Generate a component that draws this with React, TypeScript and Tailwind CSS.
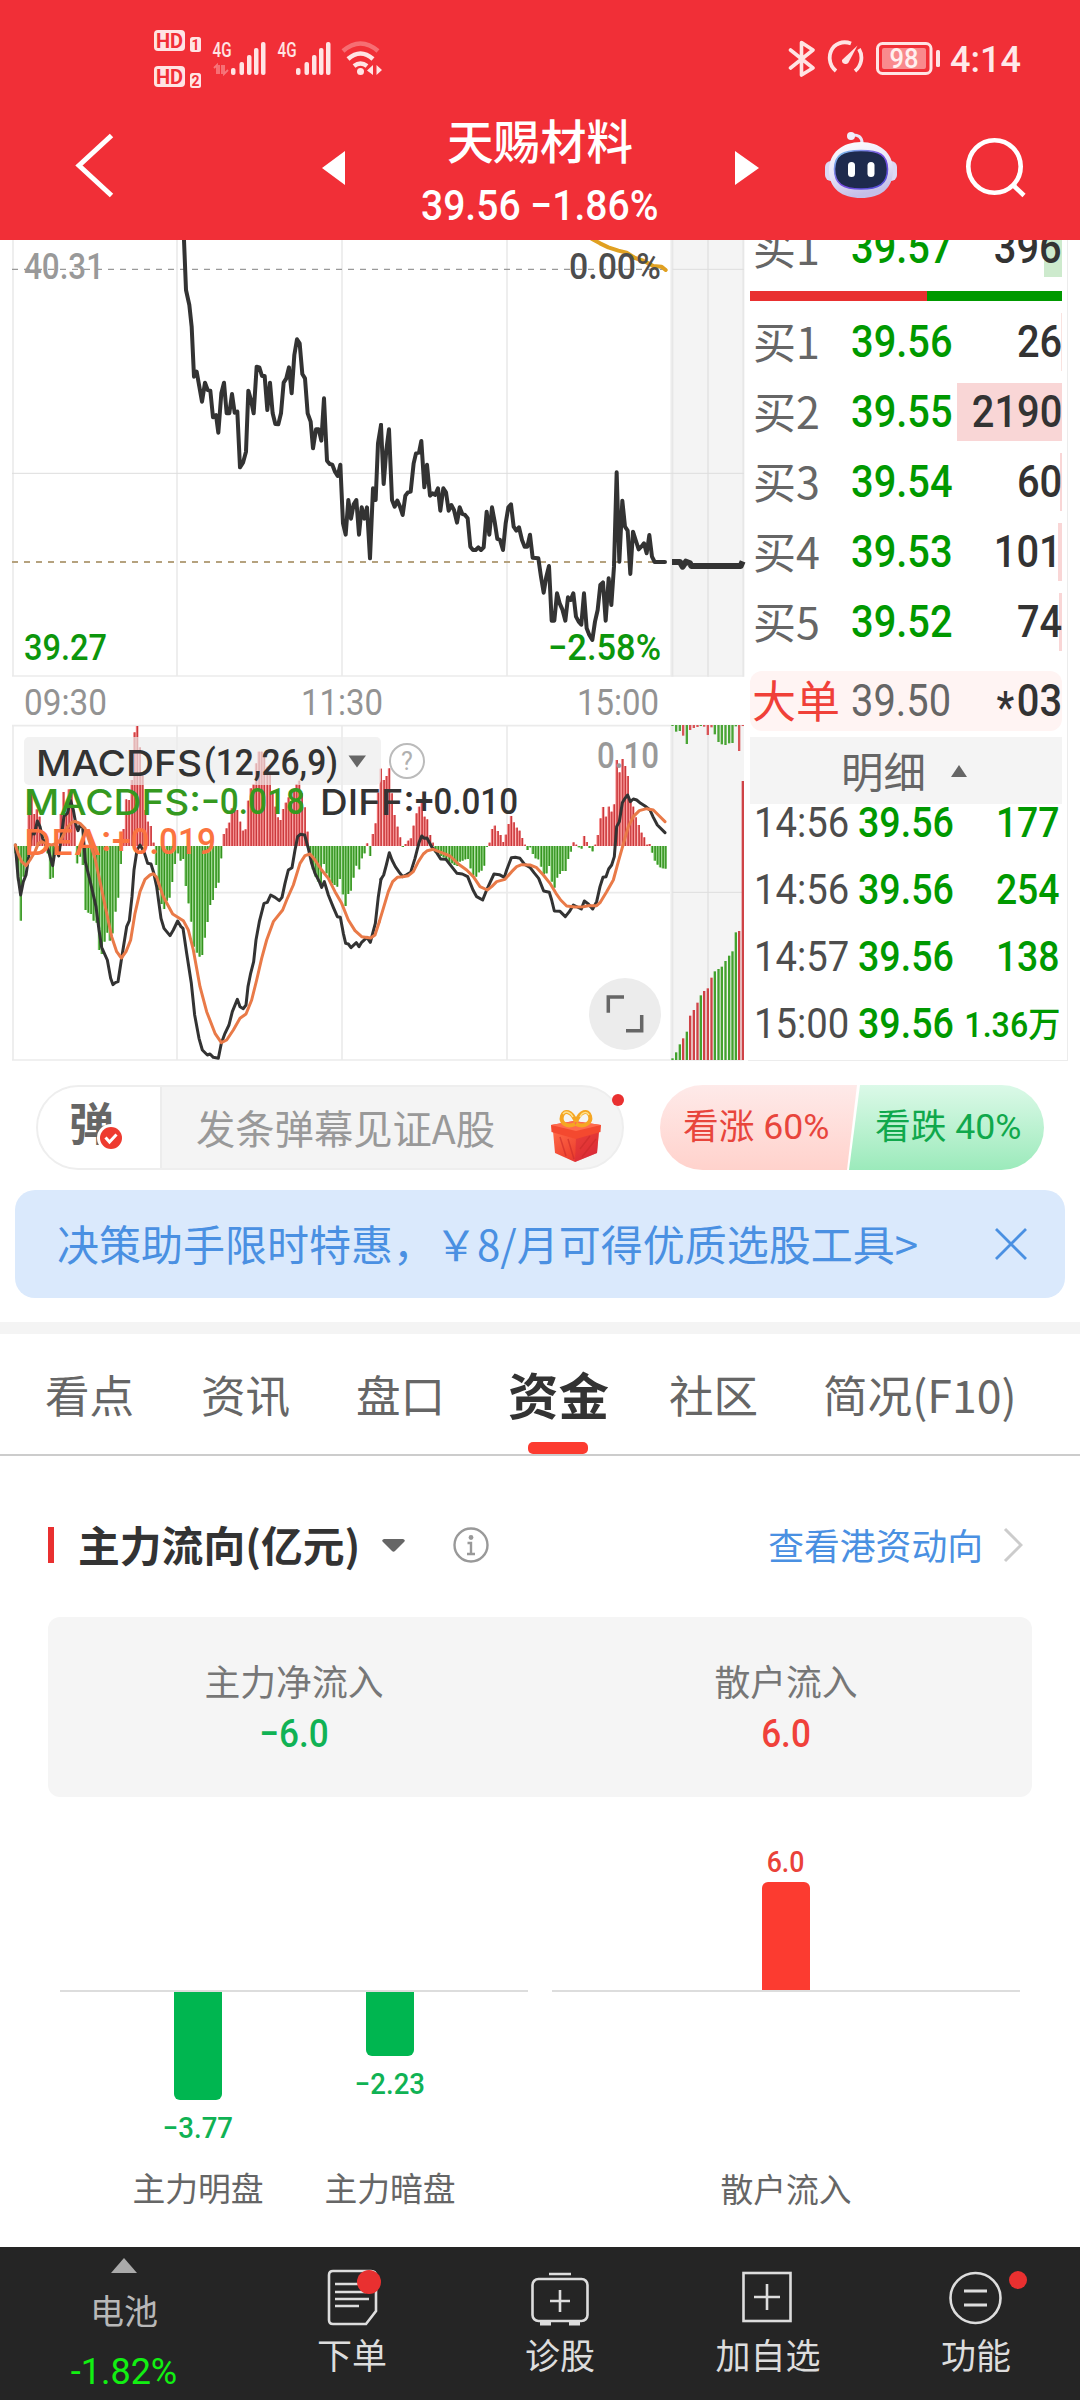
import React from "react";

const NUM = "font-['Roboto','Noto_Sans_CJK_SC',sans-serif]";
const CJK = "font-['Noto_Sans_CJK_SC',sans-serif]";

/* ---------- chart data (drawing units, three per pixel) ---------- */

const PRICE_A =
  "552,0 552,30 558,180 568,225 575,290 582,440 590,425 598,470 606,515 615,458 623,480 631,482 639,562 648,555 655,608 664,490 672,458 680,550 688,550 696,492 704,548 712,545 720,712 729,698 738,665 745,482 753,510 761,550 770,410 778,412 786,438 794,438 802,540 810,458 818,550 826,582 835,583 843,550 851,458 859,445 867,412 875,490 883,375 891,328 899,340 907,432 915,445 923,550 932,575 939,655 948,598 956,598 964,632 972,505 981,692 989,702 997,704 1005,725 1013,738 1021,704 1029,880 1037,914 1045,810 1053,866 1061,823 1069,810 1077,914 1085,832 1093,866 1101,832 1110,985 1119,775 1127,810 1134,640 1143,585";
const PRICE_B =
  "33,585 41,762 49,660 57,598 66,810 74,830 82,812 90,830 98,855 106,797 114,787 122,785 131,700 138,670 147,668 154,633 163,772 171,704 180,797 188,790 195,795 204,775 211,842 220,775 228,787 236,842 244,825 252,840 261,878 269,832 277,852 285,855 293,865 301,950 309,960 317,960 325,952 333,960 341,952 350,845 358,914 366,832 374,875 382,927 390,930 399,960 407,880 415,832 423,823 431,890 439,902 447,892 456,930 464,950 472,950 480,914 488,983 505,985 513,1040 521,1088 529,1040 537,1008 545,1172 553,1172 561,1090 569,1120 577,1138 586,1172 594,1102 602,1110 610,1090 618,1160 626,1175 634,1184 642,1090 650,1195 658,1215 667,1230 675,1175 683,1140 691,1065 699,1057 707,1172 716,1045 724,1125 732,1010 740,727 748,995 757,812 765,890 773,902 781,1032 789,905 797,930 806,958 814,950 822,940 830,970 838,915 846,980 854,996 885,996";
const AVERAGE = "665,26 690,40 715,52 745,62 770,68 795,84 820,92 850,108 875,110 887,120";
const AFTER_HOURS = "906,996 930,996 938,1010 948,995 960,1000 964,1008 1112,1008 1118,994";

const DIFF_A =
  "46,405 54,500 62,555 70,515 78,495 86,440 94,370 103,372 112,333 120,350 128,385 136,400 145,420 153,450 158,467 166,415 176,438 184,380 192,318 202,310 212,272 220,300 228,345 234,362 240,345 248,352 256,455 272,520 288,590 297,660 305,712 322,750 332,805 339,824 346,818 354,815 364,750 380,650 388,632 396,560 402,480 411,420 420,405 432,425 443,460 453,462 461,488 470,530 483,625 492,655 510,677 520,660 533,633 543,650 549,655 560,730 574,820 584,915 597,985 607,1020 622,1035 630,1032 640,1042 655,1045 664,1000 675,970 687,945 697,905 712,868 720,890 730,896 738,885 744,830 752,790 761,755 768,690 778,635 792,580 802,577 812,555 825,562 838,572 846,562 855,520 865,480 876,473 885,420 893,380 901,373 914,375 925,415 935,460 945,490 958,515 965,532 973,515 985,555 1000,592 1012,620 1021,622 1030,670 1037,700 1045,702 1053,713 1069,698 1077,710 1085,697 1101,682 1111,697 1126,640 1135,560 1143,508";
const DIFF_B =
  "33,508 41,495 49,465 58,428 66,450 76,470 88,487 98,500 108,495 122,487 135,445 147,398 155,378 163,385 171,384 185,410 198,425 212,447 228,448 245,470 261,490 277,492 293,500 309,540 320,560 338,570 350,540 360,518 372,492 388,494 403,502 410,480 424,443 436,442 450,445 464,463 480,472 492,488 506,505 521,543 538,547 545,570 553,603 570,604 586,620 598,605 610,585 634,597 643,573 655,582 668,597 680,575 690,530 699,502 708,500 716,477 725,465 733,440 740,350 748,335 757,278 765,265 773,255 781,275 790,267 800,270 812,280 825,288 840,300 850,322 862,345 885,368";
const DEA_A =
  "46,405 54,430 65,455 78,467 90,450 105,425 115,400 125,395 140,402 155,405 170,400 185,385 200,355 215,337 225,334 240,340 255,355 270,400 285,445 300,515 318,600 335,680 350,725 364,744 378,725 392,690 405,610 420,545 435,508 450,495 460,491 470,502 490,560 518,612 550,632 565,660 580,720 600,830 620,905 645,970 664,998 680,990 700,960 720,925 738,912 755,870 770,810 785,745 800,690 820,635 848,600 860,570 880,525 900,460 915,437 930,432 945,450 965,480 985,505 1005,545 1025,580 1045,630 1065,662 1085,680 1112,684 1125,675 1138,635";
const DEA_B =
  "28,635 40,595 55,545 68,515 82,502 98,500 115,497 130,485 145,455 160,432 172,422 190,418 215,428 240,438 265,462 290,480 310,500 330,530 352,540 365,530 380,515 405,508 425,485 440,470 455,464 480,465 500,473 520,495 540,520 558,550 572,570 590,588 615,591 640,590 655,587 680,587 690,578 710,545 730,510 745,455 762,395 775,350 790,320 808,302 830,296 850,300 865,315 885,335";

const HIST_A =
  "46,430 54,512 62,632 70,500 78,470 86,292 94,250 102,312 110,298 118,320 126,385 134,392 142,430 150,507 158,503 166,435 174,430 182,312 190,246 198,312 206,238 214,245 223,330 231,460 240,440 248,465 256,600 264,608 272,612 280,632 289,638 297,720 305,732 313,695 321,668 329,692 337,670 346,605 354,563 362,462 370,357 378,268 386,270 395,210 403,67 411,48 419,112 427,190 435,300 443,335 452,348 460,398 468,465 476,540 484,582 492,597 500,572 508,563 516,516 524,462 533,430 541,452 549,447 557,528 565,580 573,635 581,710 590,728 598,740 606,735 614,683 622,636 630,585 638,570 647,534 655,518 663,445 671,372 679,355 687,338 695,295 703,280 711,300 720,335 728,362 736,358 744,272 752,235 760,222 768,160 776,125 784,125 792,130 801,170 809,190 817,250 825,290 833,322 841,330 849,297 857,278 865,262 873,275 881,240 889,222 897,212 905,250 914,292 922,365 930,440 938,478 946,500 954,515 962,520 971,462 979,490 987,505 995,520 1003,525 1011,530 1019,507 1028,553 1036,588 1044,552 1052,542 1060,503 1068,467 1077,478 1085,445 1093,430 1101,400";
const HIST_B =
  "0,438 8,372 16,340 24,248 32,176 41,210 49,198 57,175 65,250 73,315 82,350 90,382 98,411 106,402 114,392 122,385 130,347 139,310 147,290 155,270 163,320 171,328 180,375 188,398 196,428 204,432 212,438 220,442 228,452 237,455 245,460 253,465 261,468 269,455 277,452 285,448 293,447 301,475 309,495 318,500 326,487 334,482 342,467 350,411 358,398 366,357 374,347 383,363 391,375 399,396 407,374 415,342 423,318 431,337 440,353 448,362 456,384 464,404 472,420 480,412 488,432 496,445 504,448 513,470 521,492 529,490 537,468 545,515 553,533 561,503 569,492 577,483 586,483 594,447 602,425 610,397 618,404 626,412 634,416 642,378 650,396 658,414 667,424 675,404 683,375 691,325 699,291 707,320 716,290 724,305 732,283 740,150 748,187 757,147 765,168 773,198 781,268 789,290 797,322 806,345 814,368 822,382 830,404 838,402 846,428 854,452 862,464 870,472 878,475 886,476";

const SIDE_BARS: [number, number, number, string][] = [
  [908, 48, 1045, "g"], [919, 65, 1027, "g"], [930, 63, 1003, "g"], [940, 77, 985, "r"],
  [951, 102, 965, "g"], [961, 60, 917, "r"], [972, 54, 900, "r"], [983, 51, 878, "r"],
  [993, 48, 856, "g"], [1003, 50, 843, "r"], [1014, 75, 835, "r"], [1025, 52, 803, "r"],
  [1035, 73, 784, "g"], [1046, 96, 777, "g"], [1056, 103, 770, "g"], [1067, 105, 753, "g"],
  [1078, 100, 737, "g"], [1088, 99, 724, "g"], [1098, 49, 667, "g"], [1108, 123, 663, "r"],
  [1119, 48, 213, "r"],
];

const BASE = 408;

function Histogram({ data }: { data: string }) {
  return (
    <g>
      {data.split(" ").map((p) => {
        const [x, y] = p.split(",").map(Number);
        const up = y < BASE;
        const top = Math.min(y, BASE);
        const h = Math.max(Math.abs(y - BASE), 3);
        return (
          <g key={x}>
            <rect x={x - 3.5} y={top} width={7.2} height={h} fill={up ? "#f58080" : "#7cc96c"} />
            <rect x={x - 0.5} y={top} width={4} height={h} fill={up ? "#c8383c" : "#35921f"} />
          </g>
        );
      })}
    </g>
  );
}

type LabelProps = {
  x: number;
  y: number;
  len: number;
  fill: string;
  size?: number;
  weight?: number;
  family?: string;
  children: React.ReactNode;
};

function Label({ x, y, len, fill, size = 36.5, weight = 500, family = "Roboto", children }: LabelProps) {
  return (
    <text
      x={x}
      y={y}
      textLength={len}
      lengthAdjust="spacingAndGlyphs"
      fontSize={size}
      fontWeight={weight}
      fontFamily={`${family}, sans-serif`}
      fill={fill}
    >
      {children}
    </text>
  );
}

function Charts() {
  return (
    <svg className="block h-[822px] w-[748px] shrink-0" viewBox="0 240 748 822">
      {/* price chart */}
      <g transform="translate(0 230) scale(0.33333)">
        <rect x={2010} y={30} width={222} height={1308} fill="#f4f4f4" />
        <g stroke="#ebebeb" strokeWidth={5}>
          <path d="M39 0V1340M531 0V1340M1026 0V1340M1521 0V1340M36 1338H2232" />
          <path d="M2017 0V1340M2124 0V1340M2230 0V1340" stroke="#e7e7e7" strokeWidth={6} />
        </g>
        <path d="M36 730H2232M2017 118H2232" stroke="#dedede" strokeWidth={3} />
        <path d="M36 118H2000" stroke="#999" strokeWidth={4} strokeDasharray="18 18" />
        <path d="M36 996H2000" stroke="#b5a27e" strokeWidth={6} strokeDasharray="18 18" />
        <g fill="none" stroke="#333" strokeWidth={12} strokeLinejoin="round" strokeLinecap="round">
          <polyline points={PRICE_A} />
          <g transform="translate(1110 0)">
            <polyline points={PRICE_B} />
            <polyline points={AFTER_HOURS} strokeWidth={18} strokeLinecap="butt" />
            <polyline points={AVERAGE} stroke="#e0a021" />
          </g>
        </g>
      </g>
      <Label x={24} y={278.5} len={80} fill="#999">40.31</Label>
      <Label x={24} y={659.5} len={83} fill="#0c960c">39.27</Label>
      <Label x={569} y={278.5} len={92} fill="#4d4d4d">0.00%</Label>
      <Label x={548} y={659.5} len={113} fill="#0c960c">−2.58%</Label>
      <Label x={24} y={714.5} len={83} fill="#939393" weight={400}>09:30</Label>
      <Label x={301} y={714.5} len={82} fill="#939393" weight={400}>11:30</Label>
      <Label x={577} y={714.5} len={82} fill="#939393" weight={400}>15:00</Label>

      {/* indicator chart */}
      <g transform="translate(0 710) scale(0.33333)">
        <rect x={2010} y={45} width={222} height={1006} fill="#f4f4f4" />
        <g stroke="#ebebeb" strokeWidth={5}>
          <path d="M39 45V1052M531 45V1052M1026 45V1052M1521 45V1052M36 47H2232M36 548H2010M36 1050H2232" />
          <path d="M2017 45V1052M2124 45V1052" stroke="#e7e7e7" strokeWidth={6} />
          <path d="M2017 547H2230" stroke="#dedede" strokeWidth={3} />
        </g>
        <Histogram data={HIST_A} />
        <g transform="translate(1110 0)">
          <Histogram data={HIST_B} />
          {SIDE_BARS.map(([x, t, b, c]) => (
            <g key={x}>
              <rect x={x - 4} y={45} width={7} height={t - 45} fill={c === "r" ? "#d95457" : "#4aa536"} />
              <rect x={x - 4} y={b} width={7} height={1050 - b} fill={c === "r" ? "#cf4347" : "#43a22e"} />
            </g>
          ))}
        </g>
        <g fill="none" strokeLinejoin="round" strokeLinecap="round" strokeWidth={9}>
          <g stroke="#333">
            <polyline points={DIFF_A} />
            <polyline points={DIFF_B} transform="translate(1110 0)" />
          </g>
          <g stroke="#e97a48">
            <polyline points={DEA_A} />
            <polyline points={DEA_B} transform="translate(1110 0)" />
          </g>
        </g>
      </g>
      <rect x={24} y={737} width={357} height={48} rx={5} fill="#ececec" fillOpacity={0.68} />
      <path d="M348.5 755.500H366L357 767.500Z" fill="#666" />
      <circle cx={407} cy={761} r={17} fill="none" stroke="#bbb" strokeWidth={2} />
      <text x={407} y={770} fontSize={25} fontFamily="Roboto, sans-serif" textAnchor="middle" fill="#b0b0b0">?</text>
      <Label x={36} y={776} len={166} fill="#333" size={36} family="Inter">MACDFS</Label>
      <Label x={204} y={775} len={134} fill="#333">(12,26,9)</Label>
      <Label x={24} y={815} len={177} fill="#35991f" size={36} family="Inter">MACDFS:</Label>
      <Label x={201} y={814} len={104} fill="#35991f">−0.018</Label>
      <Label x={320} y={815} len={95} fill="#333" size={36} family="Inter">DIFF:</Label>
      <Label x={415} y={814} len={103} fill="#333">+0.010</Label>
      <Label x={24} y={855} len={88} fill="#fb7440" size={36} family="Inter">DEA:</Label>
      <Label x={112} y={854} len={104} fill="#fb7440">+0.019</Label>
      <Label x={597} y={768} len={62} fill="#999">0.10</Label>
      <circle cx={625} cy={1014} r={36} fill="#ececec" />
      <path d="M608.300 1012.700V997H624M626 1030.700H641.700V1015" fill="none" stroke="#666" strokeWidth={3.5} />
    </svg>
  );
}

/* ---------- order book ---------- */

const bids = [
  { label: "买1", price: "39.56", qty: "26", bar: 1, y: "bg-[#f9e3e0]" },
  { label: "买2", price: "39.55", qty: "2190", bar: 105, y: "bg-[#f9d6d6]" },
  { label: "买3", price: "39.54", qty: "60", bar: 2, y: "bg-[#f9d6d6]" },
  { label: "买4", price: "39.53", qty: "101", bar: 4, y: "bg-[#f9d6d6]" },
  { label: "买5", price: "39.52", qty: "74", bar: 3, y: "bg-[#f9d6d6]" },
];

const priceCell = "w-[100px] shrink-0 origin-left whitespace-nowrap text-[45px] scale-x-[0.885]";
const qtyCell = "ml-auto shrink-0 origin-right whitespace-nowrap text-[45px] scale-x-[0.885]";

function BookRow({ label, price, qty, bar, y }: { label: string; price: string; qty: string; bar: number; y: string }) {
  return (
    <div className="relative mb-3 flex h-[58px] items-center pl-[3px]">
      <div className={`absolute right-0 top-0 h-[58px] ${y}`} style={{ width: bar }} />
      <span className={`relative w-[98px] shrink-0 -translate-y-0.5 text-[43px] leading-[58px] text-[#666] ${CJK}`}>{label}</span>
      <span className={`relative font-medium leading-[58px] text-[#009900] ${priceCell} ${NUM}`}>{price}</span>
      <span className={`relative font-medium leading-[58px] text-[#333] ${qtyCell} ${NUM}`}>{qty}</span>
    </div>
  );
}

const trades = [
  { t: "14:56", q: "177" },
  { t: "14:56", q: "254" },
  { t: "14:57", q: "138" },
  { t: "15:00", q: "1.36万" },
];

function OrderBook() {
  return (
    <div className="h-[821px] w-[320px] overflow-hidden border-b border-r border-[#ececec] pl-[2px] pr-[5px]">
      <div className="-mt-[21px]">
        <BookRow label="买1" price="39.57" qty="396" bar={18} y="bg-[#cdeacd]" />
      </div>
      <div className="mt-[14px] flex h-[10px]">
        <div className="w-[177px] bg-[#e93030]" />
        <div className="flex-1 bg-[#009900]" />
      </div>
      <div className="mt-3">
        {bids.map((b) => (
          <BookRow key={b.label} {...b} />
        ))}
      </div>
      <div className="mt-5 flex h-[60px] items-center rounded-xl bg-[#fff4f3] pl-[2px]">
        <span className={`w-[99px] shrink-0 -translate-y-0.5 whitespace-nowrap text-[44px] leading-[60px] text-[#f04038] ${CJK}`}>大单</span>
        <span className={`leading-[60px] text-[#666] ${priceCell} ${NUM}`}>39.50</span>
        <span className={`flex font-medium leading-[60px] text-[#333] ${qtyCell} ${NUM}`}>
          <span className="mr-[3px] translate-y-[7px]">*</span>03
        </span>
      </div>
      <div className="mt-1.5 flex h-[67px] items-center bg-[#f4f4f4] pl-[91px]">
        <span className={`-translate-y-px text-[42.5px] leading-[67px] text-[#666] ${CJK}`}>明细</span>
        <svg className="ml-[25px] h-3 w-4" viewBox="0 0 16 12">
          <path d="M8 0L16 12H0Z" fill="#666" />
        </svg>
      </div>
      <div className="-mt-[15px]">
        {trades.map((r, i) => (
          <div key={i} className={`flex h-[67px] items-center whitespace-nowrap pl-[4px] pr-[2px] text-[42px] leading-[67px] ${NUM}`}>
            <span className="w-[104px] shrink-0 origin-left scale-x-[0.91] text-[#4d4d4d]">{r.t}</span>
            <span className="w-[93px] shrink-0 origin-left scale-x-[0.895] font-medium text-[#009900]">39.56</span>
            <span
              className={
                r.q.length > 3
                  ? "ml-auto shrink-0 origin-right translate-y-[2px] scale-x-[0.92] text-[35px] font-medium text-[#009900]"
                  : "ml-auto shrink-0 origin-right scale-x-[0.89] font-medium text-[#009900]"
              }
            >
              {r.q}
            </span>
          </div>
        ))}
      </div>
    </div>
  );
}

/* ---------- header ---------- */

function SignalIcons() {
  const bars = [[0, 68], [8.5, 62], [16, 55], [23, 48], [30, 42]];
  return (
    <svg className="h-[70px] w-[240px]" viewBox="150 25 240 70" fill="#ffe4e4">
      {[0, 36].map((dy, i) => (
        <g key={dy} transform={`translate(0 ${dy})`}>
          <rect x={154} y={30} width={31} height={21} rx={4} />
          <text x={169.5} y={47.5} fontSize={20} fontWeight={700} textAnchor="middle" fontFamily="Roboto, sans-serif" fill="#f12f37">HD</text>
          <rect x={190} y={37} width={11} height={15} rx={2.5} />
          <text x={195.5} y={49.5} fontSize={14} fontWeight={700} textAnchor="middle" fontFamily="Roboto, sans-serif" fill="#f12f37">{i + 1}</text>
        </g>
      ))}
      {[0, 65].map((dx) => (
        <g key={dx} transform={`translate(${dx} 0)`}>
          <text x={212.5} y={57} fontSize={20} fontWeight={500} textLength={19} lengthAdjust="spacingAndGlyphs" fontFamily="Roboto, sans-serif">4G</text>
          {bars.map(([x, y]) => (
            <rect key={x} x={231 + x} y={y} width={4.5} height={75 - y} rx={2} />
          ))}
        </g>
      ))}
      <path d="M217 74V65L214 68M219 74V65M224 65V74L228 70M222 65V74" fill="none" stroke="#ffe4e4" strokeOpacity={0.4} strokeWidth={1.8} />
      <g fill="none" stroke="#ffe4e4" strokeWidth={4.5}>
        <path d="M343 51Q360.500 36 378 51" strokeOpacity={0.35} />
        <path d="M348 59Q360.500 48 373 59" />
        <path d="M354 66Q360.500 61 367 66" />
      </g>
      <circle cx={360.5} cy={71.5} r={3.5} />
      <path d="M367 70.500L373 65V75ZM382 70L376.500 65V75Z" />
    </svg>
  );
}

function StatusRight() {
  return (
    <div className="flex items-center">
      <svg className="h-[37px] w-[155px]" viewBox="787 40 155 37" fill="none" stroke="#ffe4e4">
        <path d="M790.500 50L813 68L801.500 75V42.500L813 50L790.500 68" strokeWidth={3.6} strokeLinejoin="round" strokeLinecap="round" />
        <path d="M836 71A17 17 0 0 1 834 46.500A17 17 0 0 1 851 43.500M859 49A17 17 0 0 1 855 71" strokeWidth={3.8} />
        <path d="M842 60L857.500 45.500L848.500 62.500A3.600 3.600 0 0 1 842 60Z" fill="#ffe4e4" stroke="none" />
        <rect x={877.5} y={43.5} width={53.5} height={30} rx={5} strokeWidth={3} />
        <rect x={882} y={48} width={44} height={21} rx={2} fill="#f98a8d" stroke="none" />
        <rect x={936} y={50} width={4} height={17} rx={1.5} fill="#ffe4e4" stroke="none" />
        <text x={904} y={68} fontSize={27} fontWeight={500} textAnchor="middle" textLength={29} lengthAdjust="spacingAndGlyphs" fontFamily="Roboto, sans-serif" fill="#fff0f0" stroke="none">98</text>
      </svg>
      <span className={`ml-[8px] w-[72px] translate-y-px text-[36px] font-medium leading-9 text-[#ffe9e9] ${NUM}`}>4:14</span>
    </div>
  );
}

function Robot() {
  return (
    <svg className="h-[68px] w-[74px]" viewBox="0 0 74 68">
      <defs>
        <linearGradient id="shell" x1="0" y1="0" x2="0.3" y2="1">
          <stop offset="0" stopColor="#fff" />
          <stop offset="0.6" stopColor="#e6e2f7" />
          <stop offset="1" stopColor="#c4bfe8" />
        </linearGradient>
        <linearGradient id="rim" x1="0" y1="0" x2="1" y2="1">
          <stop offset="0" stopColor="#7fd0ee" />
          <stop offset="0.5" stopColor="#7a4be0" />
          <stop offset="1" stopColor="#4c52d8" />
        </linearGradient>
      </defs>
      <path d="M27 4Q38 3 38 12" fill="none" stroke="#e9e6f7" strokeWidth={3} />
      <circle cx={27} cy={5} r={4} fill="#f1eefb" />
      <rect x={1} y={30} width={72} height={20} rx={6} fill="#dcd8f4" />
      <path d="M37 11C56 11 69 22 69 39C69 58 56 67 37 67C18 67 5 58 5 39C5 22 18 11 37 11Z" fill="url(#shell)" />
      <path d="M37 19.500C56 19.500 63 24 63.500 38C63.500 53 55 58 37 58C19 58 10.500 53 10.500 38C11 24 18 19.500 37 19.500Z" fill="#1e2a4d" stroke="url(#rim)" strokeWidth={1.6} />
      <rect x={24} y={31} width={7} height={15} rx={3.5} fill="#fff" />
      <rect x={43.5} y={31} width={7} height={15} rx={3.5} fill="#fff" />
    </svg>
  );
}

function Header() {
  return (
    <header className="h-[240px] bg-[#f12f37]">
      <div className="flex h-[110px] items-start justify-between pl-[150px] pr-[58px] pt-[25px]">
        <SignalIcons />
        <div className="mt-[15px]">
          <StatusRight />
        </div>
      </div>
      <div className="grid h-[130px] grid-cols-[322px_23px_390px_24px_65px_74px_58px_70px]">
        <svg className="mt-[22px] ml-[74px] h-[68px] w-[42px]" viewBox="0 0 42 68">
          <path d="M37.500 3.500L5 33.500L37.500 63.500" fill="none" stroke="#fff" strokeWidth={5} />
        </svg>
        <svg className="mt-[41px] h-[34px] w-[23px]" viewBox="0 0 23 34">
          <path d="M23 0V34L0 17Z" fill="#fff" />
        </svg>
        <div className="flex flex-col items-center text-white">
          <div className={`h-[60px] -translate-y-px text-[46.5px] font-medium leading-[60px] ${CJK}`}>天赐材料</div>
          <div className={`mt-[11px] h-[50px] scale-x-[0.93] whitespace-pre text-[42px] font-medium leading-[50px] ${NUM}`}>39.56 −1.86%</div>
        </div>
        <svg className="mt-[41px] h-[34px] w-6" viewBox="0 0 24 34">
          <path d="M0 0V34L24 17Z" fill="#fff" />
        </svg>
        <div />
        <div className="mt-[21px]">
          <Robot />
        </div>
        <div />
        <svg className="mt-[26px] ml-[10px] h-[64px] w-[64px]" viewBox="964 136 64 64" fill="none" stroke="#fff" strokeWidth={4.6}>
          <circle cx={992.5} cy={166.5} r={26.2} />
          <path d="M1011 185L1022 195.500" />
        </svg>
      </div>
    </header>
  );
}

/* ---------- barrage + sentiment ---------- */

function Gift() {
  return (
    <svg className="h-[53px] w-[52px]" viewBox="0 0 52 53">
      <defs>
        <linearGradient id="box" x1="0" y1="0" x2="1" y2="1">
          <stop offset="0" stopColor="#ff6a48" />
          <stop offset="0.6" stopColor="#ee4230" />
          <stop offset="1" stopColor="#cf1f3f" />
        </linearGradient>
      </defs>
      <path d="M3 22L26 29L49 22L47 44L25 53L5 44Z" fill="url(#box)" />
      <path d="M26 29L49 22L47 44L25 53Z" fill="#d9293a" fillOpacity={0.55} />
      <path d="M1 16L24 12L51 16L50.500 23L26 30L1.500 23Z" fill="#f4492f" />
      <path d="M1 16L24 12L51 16L26 22Z" fill="#ff6b4d" />
      <path d="M10 28L16 47M18 30L24 50M32 48L46 30M30 40L40 27" stroke="#c92a2a" strokeWidth={1.5} strokeOpacity={0.6} />
      <g fill="none" stroke="#f5a623" strokeWidth={4}>
        <path d="M25 15C17 19 10 14 12 7C14 0 22 2 26 13" />
        <path d="M26 15C34 19 42 14 40 7C38 0 30 2 26 13" />
      </g>
      <path d="M13 5C16 1 21 4 23 8M30 8C32 3 37 2 39 6" fill="none" stroke="#ffe08a" strokeWidth={1.5} />
    </svg>
  );
}

function BarrageRow() {
  return (
    <div className="mt-[23px] flex h-[85px] items-center pl-[36px]">
      <div className="relative flex h-[85px] w-[588px] items-center rounded-full border-2 border-[#eee] bg-[#f4f4f4]">
        <div className="relative flex h-full w-[124px] items-center rounded-l-full border-r-2 border-[#ececec] bg-white pl-[31px]">
          <span className={`-translate-y-[6px] text-[45px] font-bold leading-[60px] text-[#666] ${CJK}`}>弹</span>
          <svg className="absolute left-[59px] top-[37px] h-7 w-7" viewBox="0 0 28 28">
            <circle cx={14} cy={14} r={14} fill="#fff" />
            <circle cx={14} cy={14} r={11} fill="#ee3b30" />
            <path d="M8.500 13.500L12.500 18L19.500 10.500" fill="none" stroke="#fff" strokeWidth={3} />
          </svg>
        </div>
        <span className={`ml-[34px] -translate-y-px whitespace-nowrap text-[39.3px] leading-[60px] text-[#999] ${CJK}`}>发条弹幕见证A股</span>
        <div className="absolute left-[512px] top-[22px]">
          <Gift />
        </div>
        <div className="absolute -right-[2px] top-[7px] h-3 w-3 rounded-full bg-[#e93030]" />
      </div>
      <div className="ml-[36px] flex h-[85px] w-[384px] overflow-hidden rounded-full">
        <div className="flex w-[197px] items-center bg-linear-to-b from-[#feeae9] to-[#ffd2cc] pl-[23px] [clip-path:polygon(0_0,100%_0,187px_100%,0_100%)]">
          <span className={`whitespace-nowrap text-[35.7px] text-[#e8453c] ${NUM}`}>看涨 60%</span>
        </div>
        <div className="-ml-[8px] flex w-[195px] items-center bg-linear-to-b from-[#dbf9e8] to-[#9beabb] pl-[26px] [clip-path:polygon(11px_0,100%_0,100%_100%,0_100%)]">
          <span className={`whitespace-nowrap text-[35.7px] text-[#10a84c] ${NUM}`}>看跌 40%</span>
        </div>
      </div>
    </div>
  );
}

function Banner() {
  return (
    <div className="mx-[15px] mt-[20px] flex h-[108px] items-center justify-between rounded-[20px] bg-[#dae9fc] pl-[42px] pr-[37px]">
      <span className={`-translate-y-px whitespace-nowrap text-[42px] leading-[60px] text-[#4a90e2] ${CJK}`}>
        决策助手限时特惠，￥8/月可得优质选股工具&gt;
      </span>
      <svg className="h-8 w-[34px]" viewBox="0 0 34 32">
        <path d="M2 1L32 31M32 1L2 31" stroke="#4a90e2" strokeWidth={2.8} />
      </svg>
    </div>
  );
}

/* ---------- tabs ---------- */

function Tabs() {
  const tab = "text-[44.6px] text-[#666]";
  return (
    <nav className={`flex h-[122px] shrink-0 items-center whitespace-nowrap border-b-2 border-[#ccc] pl-[45px] leading-[64px] ${CJK}`}>
      <span className={`w-[156px] ${tab}`}>看点</span>
      <span className={`w-[155px] ${tab}`}>资讯</span>
      <span className={`w-[152px] ${tab}`}>盘口</span>
      <span className="relative w-[161px] -translate-y-px text-[50.5px] font-bold text-[#333]">
        资金
        <i className="absolute left-[20px] top-[81px] h-3 w-[60px] rounded-[5px] bg-[#fc3b30]" />
      </span>
      <span className={`w-[154px] ${tab}`}>社区</span>
      <span className={tab}>简况(F10)</span>
    </nav>
  );
}

/* ---------- capital flow ---------- */

function FlowSection() {
  return (
    <section>
      <div className="mt-[71px] flex h-[36px] items-center pl-[48px] pr-[57px]">
        <div className="h-[36px] w-[6px] bg-[#e93030]" />
        <h2 className={`ml-[24px] w-[284px] -translate-y-px whitespace-nowrap text-[41.8px] font-bold leading-[60px] text-[#333] ${CJK}`}>主力流向(亿元)</h2>
        <svg className="ml-[20px] h-[13px] w-[23px]" viewBox="0 0 23 13">
          <path d="M2 0H21Q24 1 22 3L13 12Q11.500 13.500 10 12L1 3Q-1 1 2 0Z" fill="#666" />
        </svg>
        <svg className="ml-[48px] h-9 w-9" viewBox="0 0 36 36" fill="none" stroke="#999" strokeWidth={2.4}>
          <circle cx={18} cy={18} r={16.5} />
          <path d="M14.500 16H18V26M14 27H22" />
          <circle cx={18} cy={10.5} r={2.4} fill="#999" stroke="none" />
        </svg>
        <span className={`ml-auto -translate-y-px text-[35.8px] leading-[60px] text-[#4a90e2] ${CJK}`}>查看港资动向</span>
        <svg className="ml-[20px] h-9 w-5" viewBox="0 0 20 36">
          <path d="M2 2L18 18L2 34" fill="none" stroke="#ccc" strokeWidth={3} />
        </svg>
      </div>
      <div className="mx-[48px] mt-[54px] grid h-[180px] grid-cols-2 rounded-xl bg-[#f5f5f5] pt-[38px] text-center">
        <div>
          <div className={`text-[35.8px] leading-[50px] text-[#777] ${CJK}`}>主力净流入</div>
          <div className={`mt-[4px] scale-x-[0.89] text-[39.5px] font-medium leading-[50px] text-[#10b254] ${NUM}`}>−6.0</div>
        </div>
        <div>
          <div className={`text-[35.8px] leading-[50px] text-[#777] ${CJK}`}>散户流入</div>
          <div className={`mt-[4px] scale-x-[0.89] text-[39.5px] font-medium leading-[50px] text-[#f0413a] ${NUM}`}>6.0</div>
        </div>
      </div>

      <div className="mx-[60px] flex h-[450px] justify-between">
        <div className="flex w-[468px] justify-center gap-[20px] pt-[193px]">
          <FlowColumn value="−3.77" name="主力明盘" height="h-[108px]" />
          <FlowColumn value="−2.23" name="主力暗盘" height="h-[64px]" />
        </div>
        <div className="relative flex w-[468px] flex-col items-center">
          <div className={`mt-[49px] scale-x-[0.92] text-[29px] font-medium leading-[32px] text-[#ea4239] ${NUM}`}>6.0</div>
          <div className="mt-[4px] h-[109px] w-[48px] rounded-t-[6px] bg-[#fc3b30]" />
          <div className="-mt-px h-[2px] w-full bg-[#ddd]" />
          <div className={`mt-[174px] text-[32.8px] leading-[44px] text-[#666] ${CJK}`}>散户流入</div>
        </div>
      </div>
    </section>
  );
}

function FlowColumn({ value, name, height }: { value: string; name: string; height: string }) {
  return (
    <div className="relative flex w-[172px] flex-col items-center before:absolute before:-left-[52px] before:top-0 before:h-[2px] before:w-[276px] before:bg-[#ddd]">
      <div className={`relative mt-[2px] w-[48px] rounded-b-[6px] bg-[#00b650] ${height}`} />
      <div className={`mt-[12px] scale-x-[0.95] text-[29px] font-medium leading-[32px] text-[#10b254] ${NUM}`}>{value}</div>
      <div className={`absolute top-[175px] whitespace-nowrap text-[32.8px] leading-[44px] text-[#666] ${CJK}`}>{name}</div>
    </div>
  );
}

/* ---------- bottom bar ---------- */

function FooterItem({ label, dot, children }: { label: string; dot?: string; children: React.ReactNode }) {
  return (
    <div className="relative flex flex-col items-center pt-[20px]">
      <svg className="h-[60px] w-[64px]" viewBox="0 0 64 60" fill="none" stroke="#ddd" strokeWidth={2.6}>
        {children}
      </svg>
      <div className={`mt-[2px] text-[35px] leading-[50px] text-[#ddd] ${CJK}`}>{label}</div>
      {dot && <div className={`absolute rounded-full bg-[#e93030] ${dot}`} />}
    </div>
  );
}

function Footer() {
  return (
    <footer className="grid h-[153px] shrink-0 grid-cols-[248px_repeat(4,208px)] bg-[#252525]">
      <div className="flex flex-col items-center pt-[11px]">
        <svg className="h-[15px] w-[26px]" viewBox="0 0 26 15">
          <path d="M13 0L26 15H0Z" fill="#aaa" />
        </svg>
        <div className={`mt-[12px] text-[34px] leading-[50px] text-[#b8b8b8] ${CJK}`}>电池</div>
        <div className={`mt-[13px] text-[36px] leading-[48px] text-[#12f012] ${NUM}`}>-1.82%</div>
      </div>
      <FooterItem label="下单" dot="left-[109px] top-[23px] h-6 w-6">
        <path d="M13 4H51Q56 4 56 9V44L46 57H13Q9 57 9 53V8Q9 4 13 4Z" />
        <path d="M15 17H46M15 25H46M15 32H49M15 39H39" />
      </FooterItem>
      <FooterItem label="诊股">
        <rect x={4.5} y={12} width={55} height={42} rx={6} />
        <path d="M21 7H43M32 23V45M22 34H42" />
        <path d="M12 56.500H23M41 56.500H52" strokeWidth={4} />
      </FooterItem>
      <FooterItem label="加自选">
        <rect x={7.5} y={6} width={47} height={48} />
        <path d="M31 17V43M18 30H44" />
      </FooterItem>
      <FooterItem label="功能" dot="left-[137px] top-[24px] h-[18px] w-[18px]">
        <circle cx={31.5} cy={31} r={25} />
        <path d="M20 24H43M20 38H43" strokeWidth={3} />
      </FooterItem>
    </footer>
  );
}

export default function App() {
  return (
    <div className="flex h-[2400px] w-[1080px] flex-col overflow-hidden bg-white">
      <Header />
      <div className="flex h-[822px]">
        <Charts />
        <OrderBook />
      </div>
      <BarrageRow />
      <Banner />
      <div className="mt-[24px] h-3 bg-[#f4f4f4]" />
      <Tabs />
      <FlowSection />
      <Footer />
    </div>
  );
}
